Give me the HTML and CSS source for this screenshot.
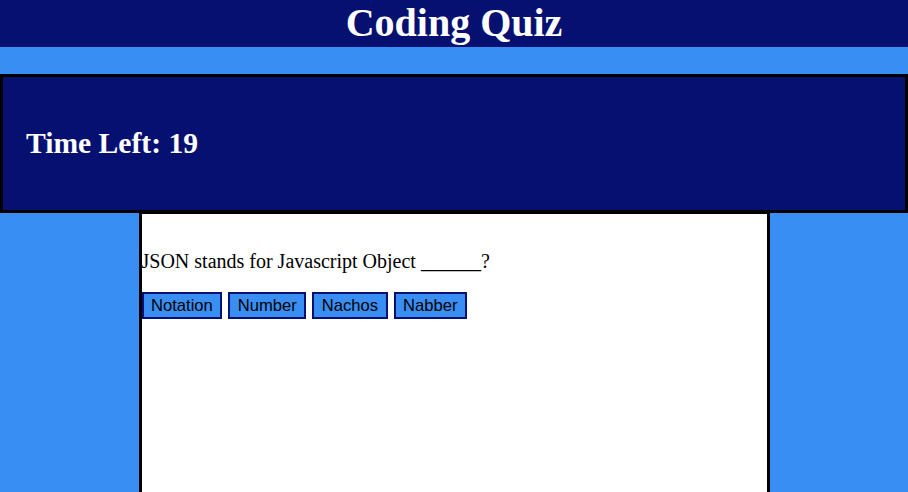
FILE: index.html
```html
<!DOCTYPE html>
<html lang="en">
<head>
<meta charset="utf-8">
<title>Coding Quiz</title>
<link rel="stylesheet" href="styles.css">
</head>
<body>
<header class="site-header">
  <h1 class="title">Coding Quiz</h1>
</header>
<section class="timer">
  <h2 class="timer-text">Time Left: 19</h2>
</section>
<main class="quiz">
  <p class="question">JSON stands for Javascript Object ______?</p>
  <div class="choices">
    <button class="choice">Notation</button>
    <button class="choice">Number</button>
    <button class="choice">Nachos</button>
    <button class="choice">Nabber</button>
  </div>
</main>
</body>
</html>
```
FILE: styles.css
```css
html, body {
  margin: 0;
  padding: 0;
}
body {
  background: #388ef3;
  font-family: "Liberation Serif", "Times New Roman", serif;
  overflow: hidden;
  height: 492px;
}
.site-header {
  background: #061070;
  height: 47px;
  margin-bottom: 27px;
}
.title {
  margin: 0;
  color: #ffffff;
  text-align: center;
  font-size: 40px;
  font-weight: bold;
  line-height: 46px;
}
.timer {
  background: #061070;
  border: 3px solid #000000;
  height: 133px;
  display: flex;
  align-items: center;
  padding-left: 23px;
}
.timer-text {
  margin: 0;
  color: #ffffff;
  font-size: 29.6px;
  font-weight: bold;
}
.quiz {
  background: #ffffff;
  width: 631px;
  box-sizing: border-box;
  margin: 0 auto;
  border: 3px solid #000000;
  border-top-width: 1px;
  border-bottom: none;
  height: 300px;
}
.question {
  margin: 36px 0 19px;
  font-size: 20px;
  color: #000000;
}
.choices {
  display: flex;
  gap: 6px;
}
.choice {
  background: #388ef3;
  border: 2px solid #061070;
  border-radius: 0;
  padding: 2px 7.5px;
  font-family: "Liberation Sans", Arial, sans-serif;
  font-size: 16.6px;
  line-height: 19px;
  color: #000000;
  margin: 0;
}
```
